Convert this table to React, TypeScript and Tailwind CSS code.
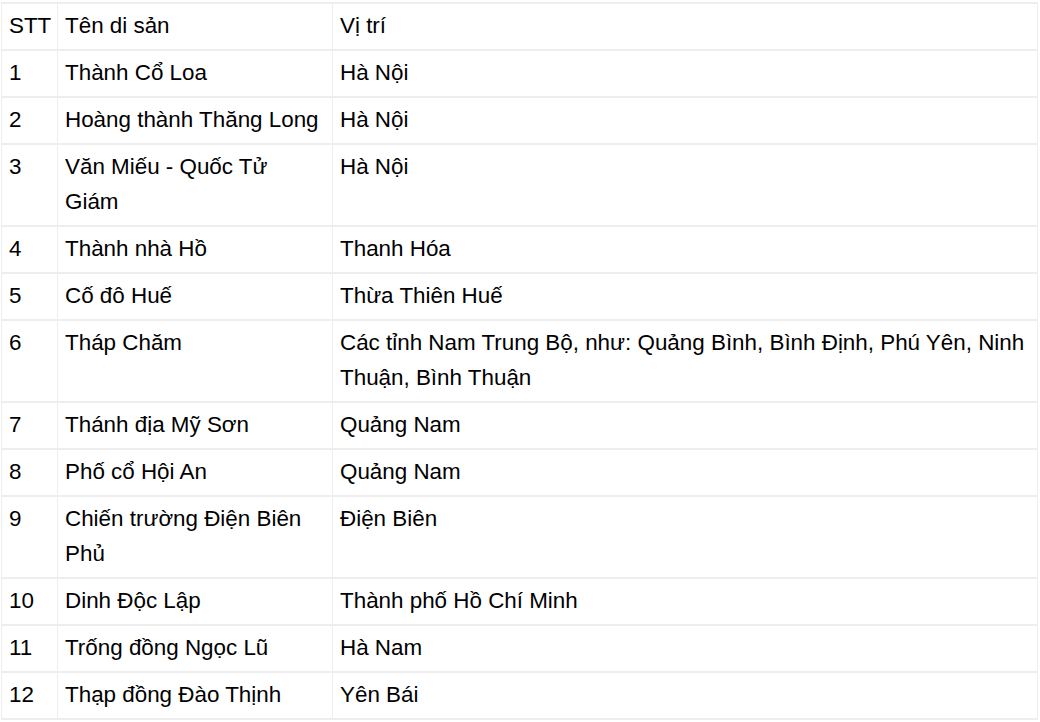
const ROWS: [string, string, string][] = [
  ["1", "Thành Cổ Loa", "Hà Nội"],
  ["2", "Hoàng thành Thăng Long", "Hà Nội"],
  ["3", "Văn Miếu - Quốc Tử Giám", "Hà Nội"],
  ["4", "Thành nhà Hồ", "Thanh Hóa"],
  ["5", "Cố đô Huế", "Thừa Thiên Huế"],
  ["6", "Tháp Chăm", "Các tỉnh Nam Trung Bộ, như: Quảng Bình, Bình Định, Phú Yên, Ninh Thuận, Bình Thuận"],
  ["7", "Thánh địa Mỹ Sơn", "Quảng Nam"],
  ["8", "Phố cổ Hội An", "Quảng Nam"],
  ["9", "Chiến trường Điện Biên Phủ", "Điện Biên"],
  ["10", "Dinh Độc Lập", "Thành phố Hồ Chí Minh"],
  ["11", "Trống đồng Ngọc Lũ", "Hà Nam"],
  ["12", "Thạp đồng Đào Thịnh", "Yên Bái"],
];

const cellCls =
  "border-x border-y-2 border-[#eeeeee] px-[7px] pt-[4px] pb-[6px] align-top text-left font-normal";

export default function App() {
  return (
    <div className="min-h-screen bg-white pt-[2px] pl-px font-['Liberation_Sans',Arial,sans-serif] text-[22.4px] leading-[35px] text-black">
      <table className="w-[1037px] table-fixed border-collapse">
        <colgroup>
          <col className="w-[56px]" />
          <col className="w-[275px]" />
          <col />
        </colgroup>
        <thead>
          <tr>
            <th className={cellCls}>STT</th>
            <th className={cellCls}>Tên di sản</th>
            <th className={cellCls}>Vị trí</th>
          </tr>
        </thead>
        <tbody>
          {ROWS.map(([n, name, place]) => (
            <tr key={n}>
              <td className={cellCls}>{n}</td>
              <td className={cellCls}>{name}</td>
              <td className={cellCls}>{place}</td>
            </tr>
          ))}
        </tbody>
      </table>
    </div>
  );
}
